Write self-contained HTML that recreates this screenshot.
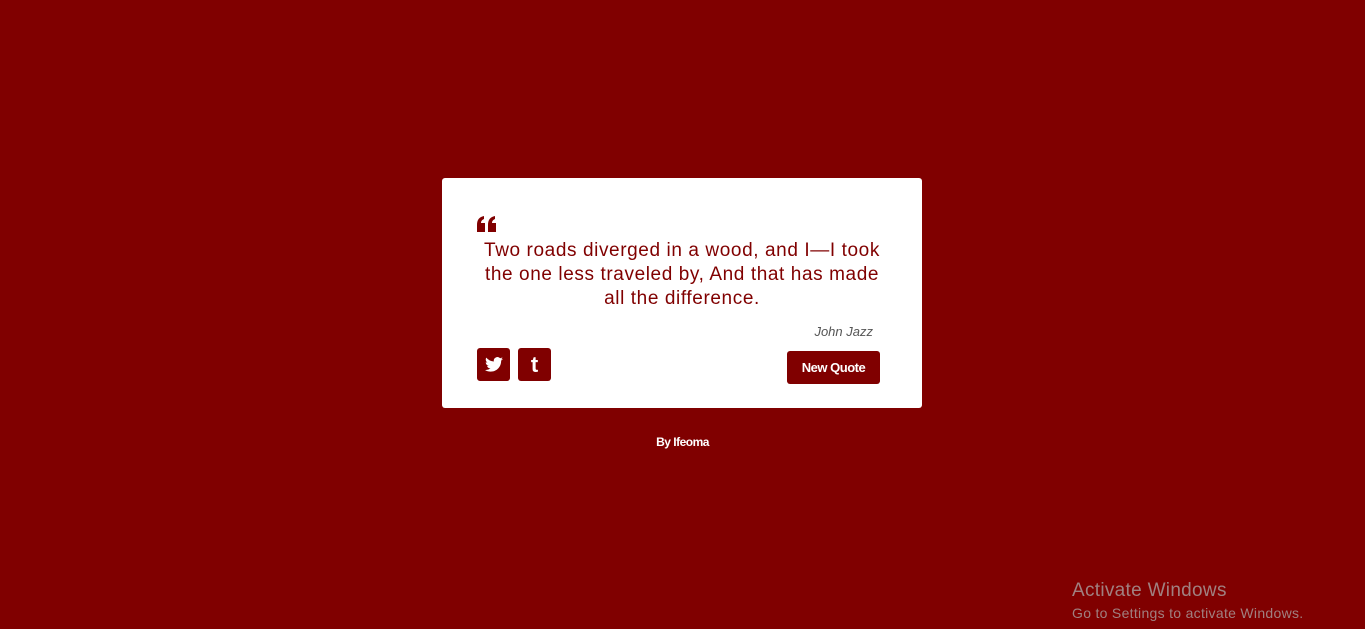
<!DOCTYPE html>
<html><head><style>
body{margin:0;width:1365px;height:629px;background:#800000;font-family:"Liberation Sans",sans-serif;position:relative;overflow:hidden}
.card{position:absolute;left:442px;top:178px;width:480px;height:230px;background:#fff;border-radius:3px}
.q{position:absolute;left:35px;top:38px}
.txt{position:absolute;left:20px;width:440px;top:61px;text-align:center;font-size:19px;line-height:24px;color:#800000;letter-spacing:0.6px;white-space:nowrap}
.auth{position:absolute;right:49px;top:146px;font-size:13px;font-style:italic;color:#555}
.ic{position:absolute;top:170px;width:33px;height:33px;background:#800000;border-radius:3px;color:#fff;display:flex;align-items:center;justify-content:center}
.btn{position:absolute;left:345px;top:173px;width:93px;height:33px;background:#800000;border-radius:3px;color:#fff;font-size:13px;font-weight:bold;display:flex;align-items:center;justify-content:center;letter-spacing:-0.5px}
.by{position:absolute;top:435px;left:0;width:1365px;text-align:center;color:#fff;font-size:12px;font-weight:bold;letter-spacing:-0.5px}
.w1{position:absolute;left:1072px;top:580px;color:#a08080;font-size:19px;letter-spacing:0.3px}
.w2{position:absolute;left:1072px;top:605px;color:#a08080;font-size:14px;letter-spacing:0.3px}
</style></head><body>
<div class="card">
<svg class="q" width="19" height="16" viewBox="0 0 19 16"><path fill="#800000" d="M0 9C0 4 2 1 7 0v3C5 4 4 5 4 7h4v9H0zM11 9c0-5 2-8 7-9v3c-2 1-3 2-3 4h4v9h-8z"/></svg>
<div class="txt">Two roads diverged in a wood, and I—I took<br>the one less traveled by, And that has made<br>all the difference.</div>
<div class="auth">John Jazz</div>
<div class="ic" style="left:35px"><svg width="18" height="15" viewBox="0 0 24 20"><path fill="#fff" d="M24 2.4a10 10 0 0 1-2.8.8A5 5 0 0 0 23.3.5a10 10 0 0 1-3.1 1.2A4.9 4.9 0 0 0 11.8 6 14 14 0 0 1 1.7.9a4.9 4.9 0 0 0 1.5 6.6A5 5 0 0 1 1 6.9a4.9 4.9 0 0 0 3.9 4.8 5 5 0 0 1-2.2.1 4.9 4.9 0 0 0 4.6 3.4A9.9 9.9 0 0 1 0 17.3 14 14 0 0 0 7.5 19.5c9.1 0 14-7.5 14-14v-.6A10 10 0 0 0 24 2.4z"/></svg></div>
<div class="ic" style="left:76px;font-size:22px;font-weight:bold;font-family:'Liberation Sans',sans-serif">t</div>
<div class="btn">New Quote</div>
</div>
<div class="by">By Ifeoma</div>
<div class="w1">Activate Windows</div>
<div class="w2">Go to Settings to activate Windows.</div>
</body></html>
